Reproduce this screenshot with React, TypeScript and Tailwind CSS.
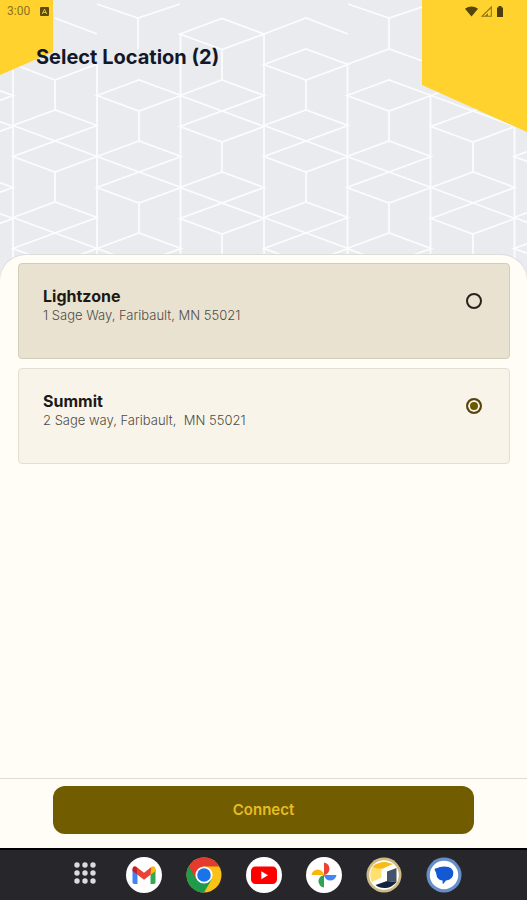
import { useState } from "react";

const sans = "font-['Inter','Liberation_Sans',sans-serif]";

type Place = { id: string; name: string; address: string };

const places: Place[] = [
  { id: "lightzone", name: "Lightzone", address: "1 Sage Way, Faribault, MN 55021" },
  { id: "summit", name: "Summit", address: "2 Sage way, Faribault,  MN 55021" },
];

// Two stacked rhombi that meet at y = c, followed by the cube's front edge.
const cube = (x: number, c: number) =>
  `M${x} ${c - 15.5}L${x + 42} ${c - 31}L${x + 84} ${c - 15.5}L${x} ${c + 15.5}L${x + 42} ${c + 31}L${x + 84} ${c + 15.5}L${x} ${c - 15.5}M${x + 42} ${c + 31}V${c + 61}`;

// Only the lower rhombus of a pair, with its front edge.
const half = (x: number, c: number) =>
  `M${x} ${c + 15.5}L${x + 42} ${c}L${x + 84} ${c + 15.5}L${x + 42} ${c + 31}ZM${x + 42} ${c + 31}V${c + 61}`;

const lattice = [
  cube(-71, 111), cube(-71, 203),
  "M55 18L97 34M13 64L55 80L97 64M55 80V110",
  cube(13, 141), cube(13, 233),
  "M97 4L138 18L180 4M138 18V49",
  half(97, 80), cube(97, 172), cube(97, 264),
  half(180, 18.5), cube(180, 111), cube(180, 203),
  "M264 34L306 18L348 34",
  half(264, 49), cube(264, 141), cube(264, 233),
  "M348 4L389 18L431 4M389 18V49M348 64L389 49L431 64",
  half(347, 80), cube(347, 172), cube(347, 264),
  cube(431, 111), cube(431, 203),
  cube(514, 141), cube(514, 233),
  "M13 64V290M97 64V290M180.5 34V290M264 34V290M347.5 64V290M430.5 95V290M514.5 126V290",
].join("");

function Backdrop() {
  return (
    <svg
      aria-hidden="true"
      className="absolute inset-x-0 top-0 w-full"
      viewBox="0 0 527 290"
      preserveAspectRatio="xMidYMin slice"
    >
      <rect width="527" height="290" fill="#e9ebee" />
      <path d={lattice} fill="none" stroke="#fbfcfd" strokeWidth="1.8" />
      <path d="M0 0H53V52L0 75Z" fill="#ffd22e" />
      <path d="M422 0H527V132L422 85Z" fill="#ffd22e" />
    </svg>
  );
}

function StatusBar() {
  return (
    <div className="flex h-[22px] items-center justify-between pr-[23px] pl-[7px]">
      <div className="flex items-center gap-2.5 text-[#8d7420]">
        <span className="font-['Roboto',sans-serif] text-xs leading-4">3:00</span>
        <svg width="9" height="9" viewBox="0 0 9 9" aria-hidden="true">
          <rect width="9" height="9" rx="1" fill="#5d4a10" />
          <path d="M2.2 7L4.5 2.2L6.8 7M3.2 5.5H5.8" fill="none" stroke="#f0c630" strokeWidth="1" />
        </svg>
      </div>
      <div className="flex items-center gap-[3px]">
        <svg width="13" height="11" viewBox="0 0 13 11" aria-hidden="true">
          <path d="M0 2.8Q6.5-2 13 2.8L6.5 10.6Z" fill="#54450a" />
        </svg>
        <svg width="11" height="11" viewBox="0 0 11 11" aria-hidden="true">
          <path d="M1 10.3H10.3V1Z" fill="none" stroke="#8b741a" strokeWidth="1.1" />
          <path d="M4 10L7 7V10Z" fill="#8b741a" />
        </svg>
        <svg width="9" height="11" viewBox="0 0 9 11" aria-hidden="true">
          <path d="M2 1.5H3.5V0H6.5V1.5H8V11H2Z" fill="#4b3e0a" />
        </svg>
      </div>
    </div>
  );
}

function PlaceCard({ place, checked, onPick }: { place: Place; checked: boolean; onPick: () => void }) {
  return (
    <label
      htmlFor={place.id}
      className={`flex min-h-24 items-start justify-between rounded border pt-[23px] pr-[27px] pb-6 pl-6 ${
        checked ? "border-[#e2ded0] bg-[#f8f4e9]" : "border-[#d3ccb8] bg-[#eae2d0]"
      }`}
    >
      <span className="flex flex-col">
        <span className="text-base leading-[18px] font-bold text-[#1b1a17]">{place.name}</span>
        <span className="text-[13px] leading-5 font-light whitespace-pre text-[#504c44]">{place.address}</span>
      </span>
      <input
        id={place.id}
        type="radio"
        name="place"
        checked={checked}
        onChange={onPick}
        className="mt-1.5 size-4 appearance-none rounded-full border-2 border-[#26231c] checked:border-[#57430f] checked:bg-[#6b5900] checked:shadow-[inset_0_0_0_2px_#f8f4e9]"
      />
    </label>
  );
}

function AppGrid() {
  return (
    <svg viewBox="0 0 36 36" className="size-9">
      {[8, 16, 24].map((y) =>
        [11, 19, 27].map((x) => <circle key={`${x}-${y}`} cx={x} cy={y} r="2.7" fill="#dcdce0" />),
      )}
    </svg>
  );
}

function Gmail() {
  return (
    <svg viewBox="0 0 36 36" className="size-9">
      <circle cx="18" cy="18" r="18" fill="#fff" />
      <path d="M6.5 12V25.2Q6.5 27 8.2 27H11.5V15.8Z" fill="#4285f4" />
      <path d="M24.5 15.8V27H27.8Q29.5 27 29.5 25.2V12Z" fill="#34a853" />
      <path d="M24.5 11.4V17.8L29.5 14V12Q29.5 9.3 27 9.3Q26 9.3 25.3 10Z" fill="#fbbc04" />
      <path d="M6.5 12V14L11.5 17.8V11.4L10.7 10Q10 9.3 9 9.3Q6.5 9.3 6.5 12Z" fill="#c5221f" />
      <path d="M10.7 10L18 15.8L25.3 10L24.5 17.8L18 22.8L11.5 17.8Z" fill="#ea4335" />
    </svg>
  );
}

function Chrome() {
  return (
    <svg viewBox="0 0 36 36" className="size-9">
      <circle cx="18" cy="18" r="17.5" fill="#fbc116" />
      <path d="M18 18L2.8 9.3A17.5 17.5 0 0 0 18 35.5L25.6 22.4Z" fill="#1e9b4b" />
      <path d="M18 9.5H33.3A17.5 17.5 0 0 0 2.8 9.3L10.4 22.4Z" fill="#e33b2e" />
      <circle cx="18" cy="18" r="8.6" fill="#fff" />
      <circle cx="18" cy="18" r="6.8" fill="#1a73e8" />
    </svg>
  );
}

function YouTube() {
  return (
    <svg viewBox="0 0 36 36" className="size-9">
      <circle cx="18" cy="18" r="18" fill="#fff" />
      <rect x="5" y="9.5" width="26" height="17.5" rx="4.5" fill="#f00" />
      <path d="M15.3 14.2L22 18.2L15.3 22.2Z" fill="#fff" />
    </svg>
  );
}

function Photos() {
  return (
    <svg viewBox="0 0 36 36" className="size-9">
      <circle cx="18" cy="18" r="18" fill="#fff" />
      <path d="M18 18V5.5A6.3 6.3 0 0 1 18 18Z" fill="#ea4335" />
      <path d="M18 18H30.5A6.3 6.3 0 0 1 18 18Z" fill="#4285f4" />
      <path d="M18 18V30.5A6.3 6.3 0 0 1 18 18Z" fill="#2fa34f" />
      <path d="M18 18H5.5A6.3 6.3 0 0 1 18 18Z" fill="#fbb60a" />
    </svg>
  );
}

function Sage() {
  return (
    <svg viewBox="0 0 36 36" className="size-9">
      <circle cx="18" cy="18" r="17.5" fill="#cdbb85" />
      <circle cx="18" cy="18" r="14.8" fill="#fff" />
      <path d="M6.5 9.5L15.5 12V20.5L6 25Q2.2 17 6.5 9.5Z" fill="#ffdf6e" />
      <path d="M6.5 9.5Q12 4.5 20 5L27 7L17 11.5Q11 12.5 6.5 9.5Z" fill="#f9bb16" />
      <path d="M21 14.5L30.5 11V25L21 24Z" fill="#44546a" />
      <path d="M9.5 28L21 24L30.5 25Q26 30.5 20 31Q13 31.5 9.5 28Z" fill="#15243a" />
    </svg>
  );
}

function Messages() {
  return (
    <svg viewBox="0 0 36 36" className="size-9">
      <circle cx="18" cy="18" r="17.5" fill="#668fca" />
      <circle cx="18" cy="18" r="14.2" fill="#fff" />
      <path
        d="M8.6 12.2Q8.8 11.4 10.5 11.2Q13.5 9.6 18.5 9.6Q27.3 9.8 27.3 16.6Q27.1 23 20 23.6L17.6 26.6Q16.8 27.2 16.6 26.3V23.5Q10.6 22.8 10.4 17.2Q10.3 15.5 8.8 13.2Z"
        fill="#1459d3"
      />
    </svg>
  );
}

const dock = [
  { name: "All apps", Icon: AppGrid },
  { name: "Gmail", Icon: Gmail },
  { name: "Chrome", Icon: Chrome },
  { name: "YouTube", Icon: YouTube },
  { name: "Photos", Icon: Photos },
  { name: "Sage", Icon: Sage },
  { name: "Messages", Icon: Messages },
];

export default function App() {
  const [picked, setPicked] = useState("summit");

  return (
    <div className={`relative flex min-h-screen flex-col bg-[#fffdf5] ${sans}`}>
      <Backdrop />
      <header className="relative h-[255px]">
        <StatusBar />
        <h1 className="px-9 pt-[21px] text-xl leading-7 font-bold text-[#12182a]">Select Location (2)</h1>
      </header>
      <main className="relative flex flex-1 flex-col rounded-t-[26px] bg-[#fffdf5] shadow-[0_-1px_1px_#dcdcd8]">
        <div role="radiogroup" aria-label="Select Location" className="flex flex-1 flex-col gap-[9px] pt-2 pr-[17px] pl-[18px]">
          {places.map((place) => (
            <PlaceCard
              key={place.id}
              place={place}
              checked={picked === place.id}
              onPick={() => setPicked(place.id)}
            />
          ))}
        </div>
        <div className="flex border-t border-[#dddbd4] px-[53px] pt-[7px] pb-3.5">
          <button
            type="button"
            className="h-12 flex-1 rounded-xl bg-[#715c00] text-[15px] leading-5 font-semibold text-[#e6bd22]"
          >
            Connect
          </button>
        </div>
      </main>
      <nav
        aria-label="Dock"
        className="relative flex h-[52px] items-center justify-center gap-6 border-t-2 border-black bg-[#26262b]"
      >
        {dock.map(({ name, Icon }) => (
          <button key={name} type="button" aria-label={name} className="size-9">
            <Icon />
          </button>
        ))}
      </nav>
    </div>
  );
}
